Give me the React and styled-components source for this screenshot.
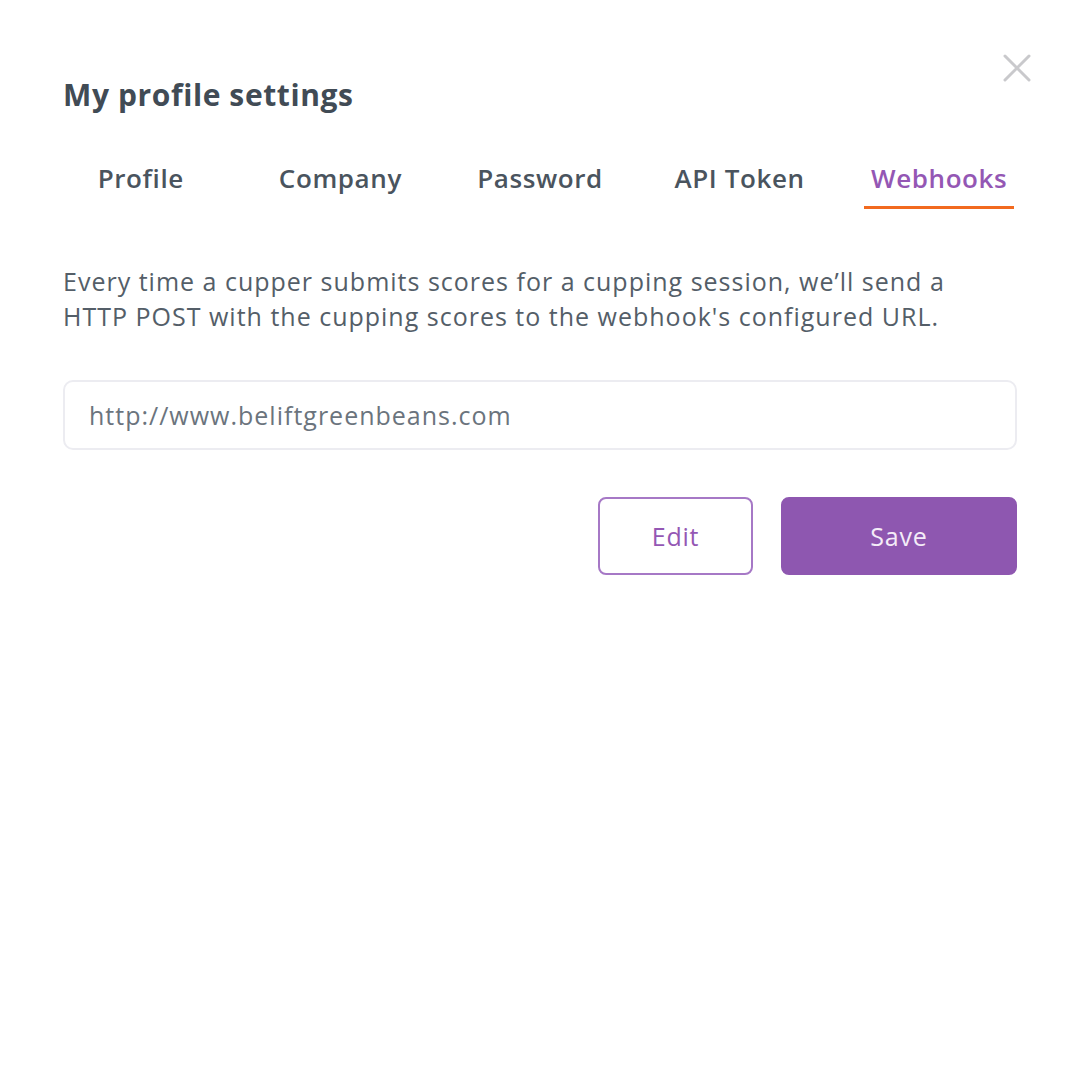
import React, { useState } from "react";
import styled, { createGlobalStyle } from "styled-components";

const GlobalStyle = createGlobalStyle`
  html, body {
    margin: 0;
    padding: 0;
    background: #ffffff;
  }
  body {
    font-family: "Open Sans", "Noto Sans", sans-serif;
    color: #444e58;
  }
  * {
    box-sizing: border-box;
  }
`;

const tabs = ["Profile", "Company", "Password", "API Token", "Webhooks"];

export default function App() {
  const [active, setActive] = useState("Webhooks");
  const [url, setUrl] = useState("http://www.beliftgreenbeans.com");

  return (
    <>
      <GlobalStyle />
      <Modal>
        <CloseButton aria-label="Close">
          <svg width="30" height="30" viewBox="0 0 30 30">
            <path d="M3 3 L27 27 M27 3 L3 27" stroke="#c9c9cc" strokeWidth="3" strokeLinecap="round" />
          </svg>
        </CloseButton>
        <Title>My profile settings</Title>
        <TabRow>
          {tabs.map((t) => (
            <Tab key={t} onClick={() => setActive(t)}>
              <TabLabel $active={t === active}>{t}</TabLabel>
            </Tab>
          ))}
        </TabRow>
        <Description>
          Every time a cupper submits scores for a cupping session, we’ll send a
          <br />
          HTTP POST with the cupping scores to the webhook's configured URL.
        </Description>
        <UrlInput value={url} onChange={(e) => setUrl(e.target.value)} />
        <Actions>
          <Button $variant="outline">Edit</Button>
          <Button $variant="solid">Save</Button>
        </Actions>
      </Modal>
    </>
  );
}

const Modal = styled.div`
  position: relative;
  width: 1080px;
  min-height: 1080px;
  padding: 74px 63px 0 63px;
`;

const CloseButton = styled.button`
  position: absolute;
  top: 53px;
  right: 48px;
  border: none;
  background: none;
  padding: 0;
  cursor: pointer;
  line-height: 0;
`;

const Title = styled.h1`
  margin: 0;
  font-size: 30px;
  font-weight: 700;
  color: #414b55;
  line-height: 42px;
  letter-spacing: 0.6px;
`;

const TabRow = styled.div`
  display: flex;
  margin: 43px -22px 0;
`;

const Tab = styled.div`
  flex: 1;
  display: flex;
  justify-content: center;
  cursor: pointer;
`;

const TabLabel = styled.span`
  display: inline-block;
  padding: 0 7px 9px;
  font-size: 26px;
  line-height: 38px;
  font-weight: 600;
  letter-spacing: 0.6px;
  color: ${(p) => (p.$active ? "#9457b4" : "#4a545e")};
  border-bottom: 3px solid ${(p) => (p.$active ? "#f26a1f" : "transparent")};
`;

const Description = styled.p`
  margin: 55px 0 0;
  font-size: 25px;
  line-height: 35px;
  color: #545e68;
  letter-spacing: 1px;
`;

const UrlInput = styled.input`
  display: block;
  width: 100%;
  height: 70px;
  margin-top: 46px;
  padding: 0 24px;
  border: 2px solid #ececf1;
  border-radius: 10px;
  font-family: inherit;
  font-size: 25px;
  letter-spacing: 1px;
  color: #6b747d;
  outline: none;
`;

const Actions = styled.div`
  display: flex;
  justify-content: flex-end;
  gap: 28px;
  margin-top: 47px;
`;

const Button = styled.button`
  height: 78px;
  width: ${(p) => (p.$variant === "solid" ? "236px" : "155px")};
  border-radius: 8px;
  font-family: inherit;
  font-size: 25px;
  letter-spacing: 0.8px;
  cursor: pointer;
  border: 2px solid ${(p) => (p.$variant === "solid" ? "#8e57b0" : "#a678c6")};
  background: ${(p) => (p.$variant === "solid" ? "#8e57b0" : "#ffffff")};
  color: ${(p) => (p.$variant === "solid" ? "#f4ecf8" : "#9457b4")};
`;
